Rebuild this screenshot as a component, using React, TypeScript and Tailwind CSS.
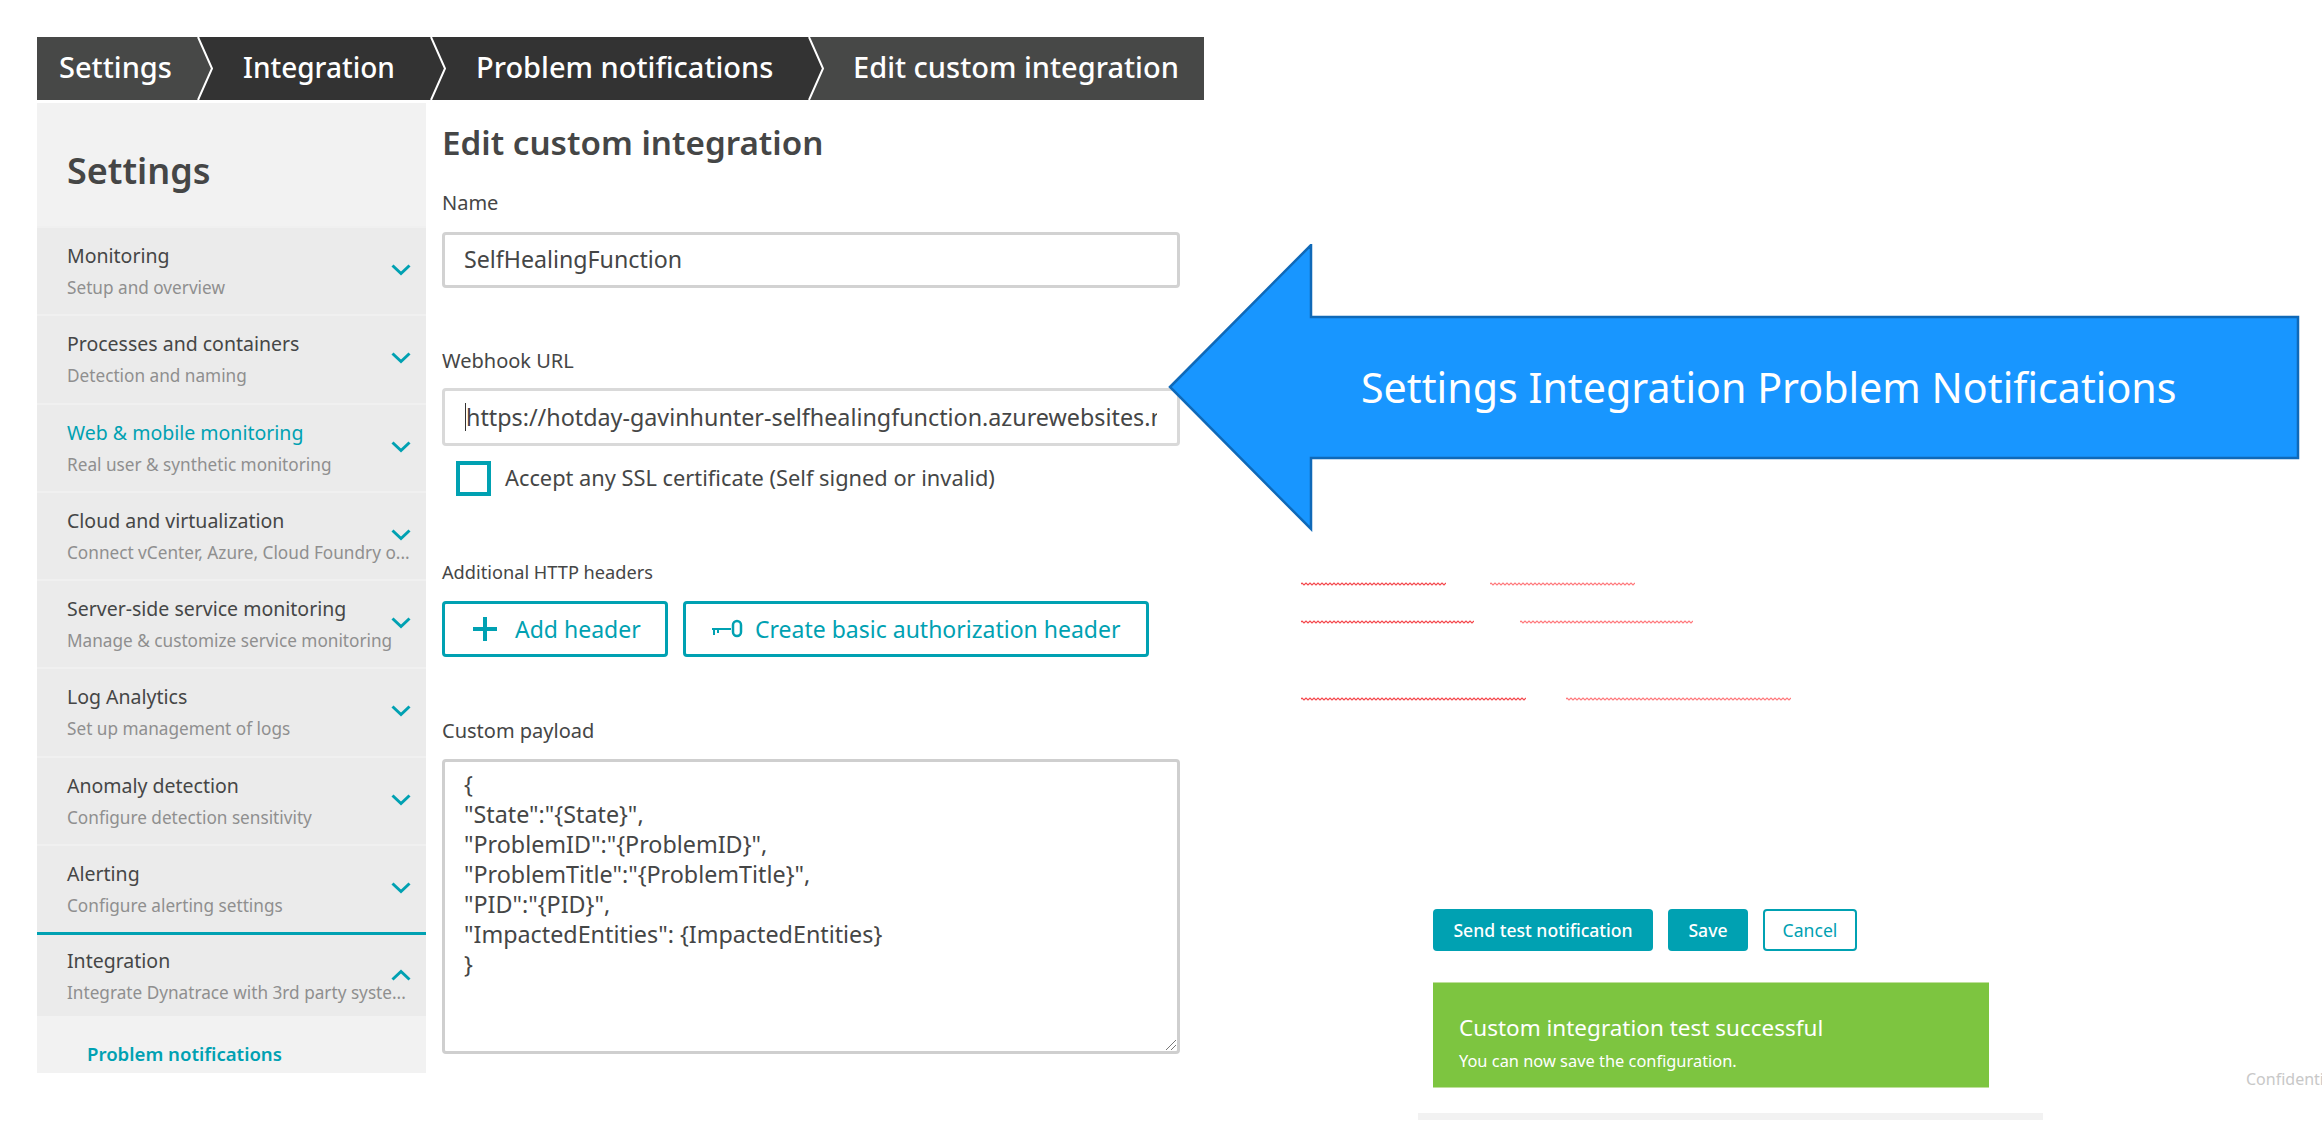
import React from "react";

const FONT = "font-['Noto_Sans',sans-serif]";

const items = [
  ["Monitoring", "Setup and overview"],
  ["Processes and containers", "Detection and naming"],
  ["Web & mobile monitoring", "Real user & synthetic monitoring"],
  ["Cloud and virtualization", "Connect vCenter, Azure, Cloud Foundry o..."],
  ["Server-side service monitoring", "Manage & customize service monitoring"],
  ["Log Analytics", "Set up management of logs"],
  ["Anomaly detection", "Configure detection sensitivity"],
  ["Alerting", "Configure alerting settings"],
];

function Chevron({ up = false }: { up?: boolean }) {
  return (
    <svg width="20" height="12" viewBox="0 0 20 12" fill="none" className="shrink-0">
      <path d={up ? "M1.5 10.5 L10 2.5 L18.5 10.5" : "M1.5 1.5 L10 9.5 L18.5 1.5"} stroke="#00a1b2" strokeWidth="3" />
    </svg>
  );
}

function Crumb({ label, width, bg, prev, pad, size = "text-[29px]" }: { label: string; width: string; bg: string; prev?: string; pad: string; size?: string }) {
  return (
    <div className={`relative flex h-full items-center pb-[4px] ${width} ${bg} ${pad}`}>
      {prev && (
        <svg width="18" height="63" viewBox="0 0 18 63" className="absolute left-[-4px] top-0">
          <path d="M0 0 L2 0 L16 31.5 L2 63 L0 63 Z" fill={prev} />
          <path d="M2 0 L16 31.5 L2 63" fill="none" stroke="#ffffff" strokeWidth="2" />
        </svg>
      )}
      <span className={`whitespace-nowrap font-medium text-white ${size}`}>{label}</span>
    </div>
  );
}

function Label({ children, className = "" }: { children: React.ReactNode; className?: string }) {
  return <div className={`leading-[28px] text-[#454646] ${className}`}>{children}</div>;
}

function Squiggle({ width, color }: { width: number; color: string }) {
  let d = "M0 2";
  for (let x = 0; x < width; x += 2) d += ` L${x + 1} ${(x / 2) % 2 === 0 ? 1 : 3}`;
  return (
    <svg width={width} height="4" viewBox={`0 0 ${width} 4`} className="block">
      <path d={d} fill="none" stroke={color} strokeWidth="1.2" />
    </svg>
  );
}

function SquiggleRow({ a, gap, className = "" }: { a: number; gap: string; className?: string }) {
  return (
    <div className={`flex ${gap} ${className}`}>
      <Squiggle width={a} color="#f4484d" />
      <Squiggle width={a} color="#ff7a7d" />
    </div>
  );
}

export default function App() {
  return (
    <div className={`relative flex h-[1122px] w-[2322px] overflow-hidden bg-white text-[#454646] ${FONT}`}>
      {/* Left screenshot */}
      <div className="ml-[37px] mt-[37px] flex h-[1036px] w-[1167px] shrink-0 flex-col">
        <div className="flex h-[63px] shrink-0">
          <Crumb label="Settings" width="w-[163px]" bg="bg-[#474847]" pad="pl-[22px]" />
          <Crumb label="Integration" width="w-[233px]" bg="bg-[#333333]" prev="#474847" pad="pl-[43px]" size="text-[28px]" />
          <Crumb label="Problem notifications" width="w-[378px]" bg="bg-[#333333]" prev="#333333" pad="pl-[43px]" />
          <Crumb label="Edit custom integration" width="w-[393px]" bg="bg-[#474847]" prev="#333333" pad="pl-[42px]" />
        </div>
        <div className="mt-[3px] flex min-h-0 flex-1">
          <aside className="flex w-[389px] shrink-0 flex-col bg-[#f2f2f2]">
            <div className="flex h-[123px] shrink-0 items-center pl-[30px] pt-[12px] text-[36px] font-semibold text-[#454646]">
              Settings
            </div>
            {items.map(([title, sub]) => (
              <div key={title} className="flex h-[88.25px] shrink-0 items-center border-t-2 border-[#f0f0f0] bg-[#ebebeb] pl-[30px] pr-[15px]">
                <div className="min-w-0 flex-1">
                  <div className={`text-[19.5px] leading-[30px] ${title.startsWith("Web") ? "text-[#00a1b2]" : "text-[#454646]"}`}>{title}</div>
                  <div className="mt-[3px] whitespace-nowrap text-[17.2px] leading-[27px] text-[#8f8f8f]">{sub}</div>
                </div>
                <div className="pb-[2px]"><Chevron /></div>
              </div>
            ))}
            <div className="flex h-[84px] shrink-0 items-center border-t-[3px] border-[#00a1b2] bg-[#ebebeb] pl-[30px] pr-[15px]">
              <div className="min-w-0 flex-1">
                <div className="text-[19.5px] leading-[30px] text-[#454646]">Integration</div>
                <div className="mt-[3px] whitespace-nowrap text-[17.2px] leading-[27px] text-[#8f8f8f]">Integrate Dynatrace with 3rd party syste...</div>
              </div>
              <div className="ml-[-20px] pb-[2px]"><Chevron up /></div>
            </div>
            <div className="pl-[50px] pt-[24px] text-[18.6px] font-semibold leading-[28px] text-[#00a1b2]">Problem notifications</div>
          </aside>
          <main className="min-w-0 flex-1 pl-[16px]">
            <h1 className="pt-[18px] text-[33.2px] font-semibold leading-[44px] text-[#454646]">Edit custom integration</h1>
            <Label className="mt-[24px] text-[20px]">Name</Label>
            <div className="mt-[15px] flex h-[56px] w-[738px] items-center rounded-[4px] border-[3px] border-[#d2d2d2] pb-[2px] pl-[19px] text-[23.2px] text-[#454646]">SelfHealingFunction</div>
            <Label className="mt-[59px] text-[20px]">Webhook URL</Label>
            <div className="relative mt-[13px] flex h-[58px] w-[738px] items-center overflow-hidden rounded-[4px] border-[3px] border-[#d9d9d9] pl-[20px] pr-[20px] text-[23.3px] text-[#454646]">
              <span className="h-[28px] w-px shrink-0 bg-[#333]" />
              <span className="overflow-hidden whitespace-nowrap">https://hotday-gavinhunter-selfhealingfunction.azurewebsites.net/api/problem</span>
            </div>
            <div className="mt-[15px] flex items-center pl-[14px]">
              <span className="h-[35px] w-[35px] border-[4px] border-[#00a1b2]" />
              <span className="ml-[14px] text-[21.8px] text-[#454646]">Accept any SSL certificate (Self signed or invalid)</span>
            </div>
            <Label className="mt-[62px] text-[18.2px]">Additional HTTP headers</Label>
            <div className="mt-[15px] flex gap-[15px]">
              <button className="flex h-[56px] w-[226px] items-center rounded-[4px] border-[3px] border-[#00a1b2] pl-[27px] text-[23px] text-[#00a1b2]">
                <svg width="26" height="26" viewBox="0 0 26 26"><path d="M13 1 V25 M1 13 H25" stroke="#00a1b2" strokeWidth="4" /></svg>
                <span className="ml-[17px]">Add header</span>
              </button>
              <button className="flex h-[56px] w-[466px] items-center rounded-[4px] border-[3px] border-[#00a1b2] pl-[25px] text-[23px] text-[#00a1b2]">
                <svg width="32" height="22" viewBox="0 0 32 22" fill="none">
                  <path d="M1 11 H20" stroke="#00a1b2" strokeWidth="2" />
                  <path d="M3 11 V17 M7 11 V15" stroke="#00a1b2" strokeWidth="2" />
                  <rect x="22" y="3" width="8" height="15" rx="4" stroke="#00a1b2" strokeWidth="2.5" />
                </svg>
                <span className="ml-[12px]">Create basic authorization header</span>
              </button>
            </div>
            <Label className="mt-[60px] text-[20px]">Custom payload</Label>
            <div className="relative mt-[14px] h-[295px] w-[738px] rounded-[4px] border-[3px] border-[#cfcfcf] pl-[19px] pt-[7px] text-[23.3px] leading-[30px] text-[#454646]">
              <div>{"{"}</div>
              <div>{'"State":"{State}",'}</div>
              <div>{'"ProblemID":"{ProblemID}",'}</div>
              <div>{'"ProblemTitle":"{ProblemTitle}",'}</div>
              <div>{'"PID":"{PID}",'}</div>
              <div>{'"ImpactedEntities": {ImpactedEntities}'}</div>
              <div>{"}"}</div>
              <svg width="12" height="12" viewBox="0 0 12 12" className="absolute bottom-0 right-0">
                <path d="M1 11 L11 1 M6 11 L11 6" stroke="#777" strokeWidth="1" />
              </svg>
            </div>
          </main>
        </div>
      </div>

      {/* Right column */}
      <div className="min-w-0 flex-1 flex-col">
        <div className="ml-[97px] pt-[582px]">
          <SquiggleRow a={145} gap="gap-[44px]" />
          <SquiggleRow a={173} gap="gap-[46px]" className="mt-[34px]" />
          <SquiggleRow a={225} gap="gap-[40px]" className="mt-[73px]" />
        </div>
        <div className="ml-[229px] mt-[208px] flex h-[42px] gap-[15px] text-[17.6px] font-medium">
          <button className="w-[220px] rounded-[4px] bg-[#00a1b2] text-white">Send test notification</button>
          <button className="w-[80px] rounded-[4px] bg-[#00a1b2] text-white">Save</button>
          <button className="w-[94px] rounded-[4px] border-2 border-[#00a1b2] font-normal text-[#00a1b2]">Cancel</button>
        </div>
        <div className="ml-[229px] mt-[31px] h-[106px] w-[556px] border-y border-[#bfe09c] bg-[#7dc540] pl-[26px] pt-[27px] text-white">
          <div className="text-[22.5px] leading-[36px]">Custom integration test successful</div>
          <div className="mt-[3px] text-[16.4px] leading-[24px]">You can now save the configuration.</div>
        </div>
        <div className="ml-[214px] mt-[25px] h-[7px] w-[625px] bg-[#f2f2f2]" />
      </div>

      {/* Arrow callout over the form */}
      <div className="absolute left-[1168px] top-[244px] h-[290px] w-[1134px]">
        <svg width="1134" height="290" viewBox="0 0 1134 290" className="absolute inset-0">
          <path d="M2 143 L143 1 V73 H1130 V214 H143 V285 Z" fill="#1896ff" stroke="#0f69b8" strokeWidth="2.5" />
        </svg>
        <div className="absolute left-[193px] top-[115px] whitespace-nowrap text-[41.2px] leading-[56px] text-white">Settings Integration Problem Notifications</div>
      </div>

      <div className="absolute left-[2246px] top-[1067px] whitespace-nowrap text-[16px] leading-[24px] text-[#c8c8c8]">Confidential</div>
    </div>
  );
}
